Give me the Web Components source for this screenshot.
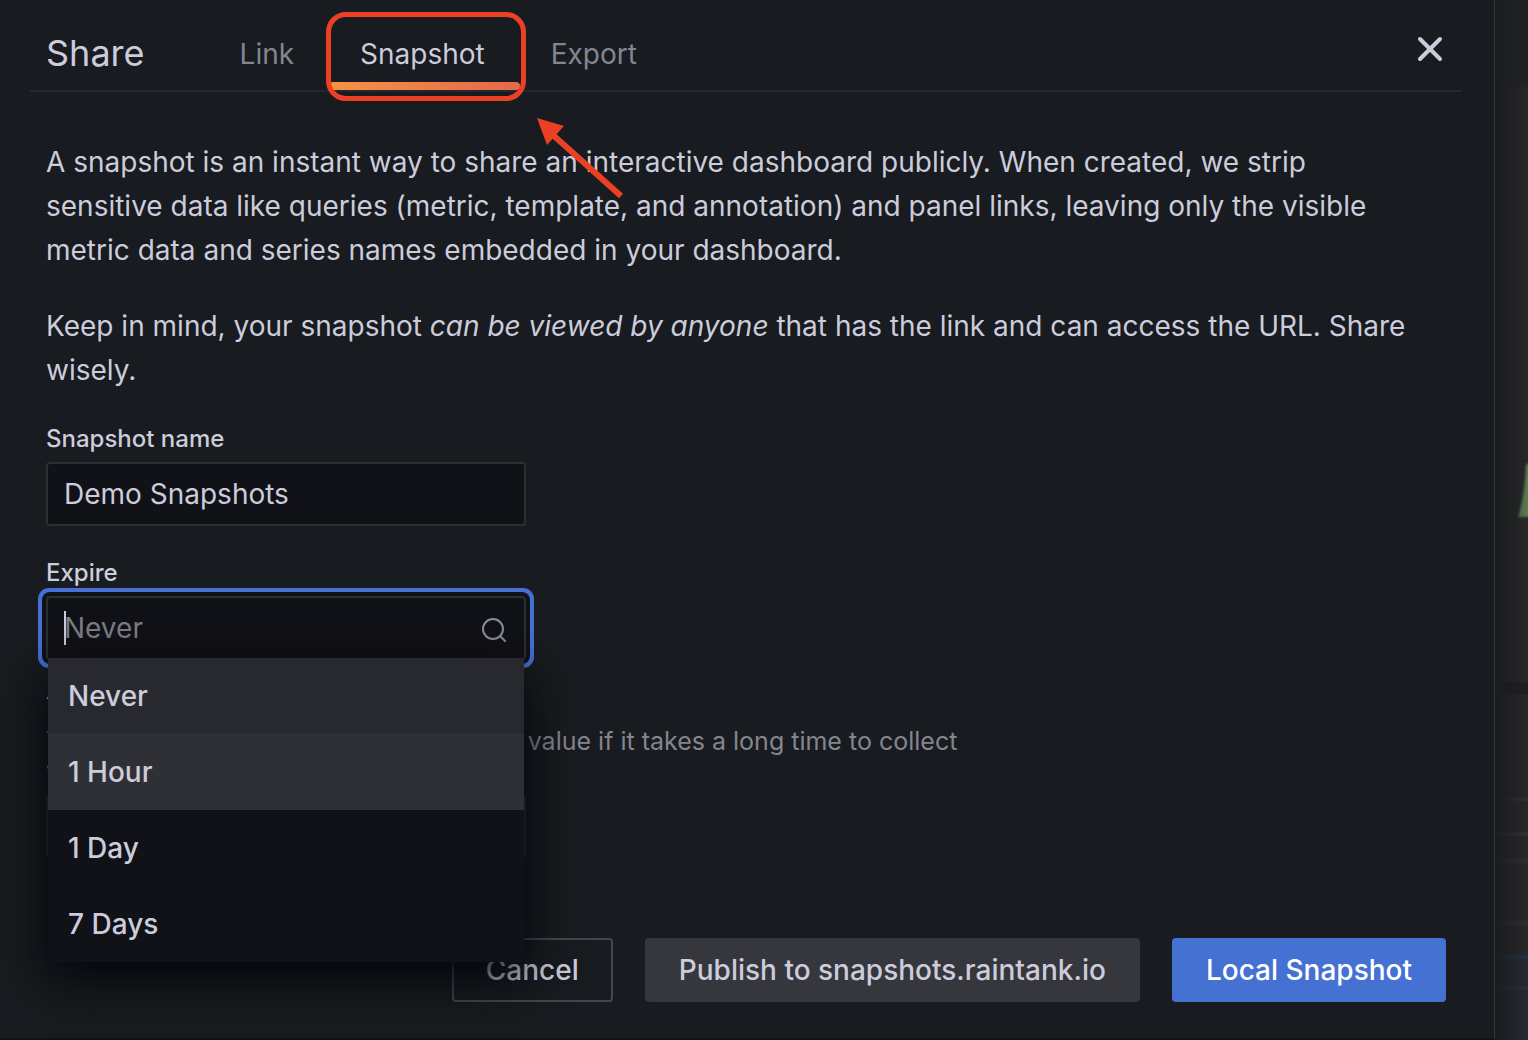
<!DOCTYPE html>
<html lang="en">
<head>
<meta charset="utf-8">
<title>Share</title>
<style>
    * { box-sizing: border-box; }
    body {
        margin: 0;
        min-height: 100vh;
        background: #232325;
        color: #ccccdc;
        font-family: Inter, "Liberation Sans", sans-serif;
        font-size: 28px;
        line-height: 44px;
        font-optical-sizing: none;
        overflow: hidden;
    }
    p {
        max-width: 1372px;
        margin: 0 0 32px;
    }
</style>
</head>
<body>
<dashboard-page>
    <share-modal heading="Share">
        <share-tab slot="tabs">Link</share-tab>
        <share-tab slot="tabs" active>Snapshot</share-tab>
        <share-tab slot="tabs">Export</share-tab>

        <p>A snapshot is an instant way to share an interactive dashboard publicly. When created, we strip sensitive data like queries (metric, template, and annotation) and panel links, leaving only the visible metric data and series names embedded in your dashboard.</p>
        <p>Keep in mind, your snapshot <em>can be viewed by anyone</em> that has the link and can access the URL. Share wisely.</p>

        <form-field label="Snapshot name" value="Demo Snapshots"></form-field>
        <expire-picker label="Expire" placeholder="Never" options="Never,1 Hour,1 Day,7 Days"></expire-picker>
        <form-field label="Timeout (seconds)" value="4" hint="You might need to configure the timeout value if it takes a long time to collect your dashboard metrics."></form-field>

        <action-button slot="actions" variant="outline">Cancel</action-button>
        <action-button slot="actions" variant="secondary">Publish to snapshots.raintank.io</action-button>
        <action-button slot="actions" variant="primary">Local Snapshot</action-button>
    </share-modal>
</dashboard-page>

<script>
// attach an open shadow root filled with the given markup
function render(el, html) {
    const root = el.attachShadow({ mode: 'open' });
    const template = document.createElement('template');
    template.innerHTML = '<style>* { box-sizing: border-box; }</style>' + html;
    root.appendChild(template.content.cloneNode(true));
    return root;
}

// dimmed dashboard behind the modal, only a strip of it shows on the right
class DashboardPage extends HTMLElement {
    constructor() {
        super();
        render(this, `
            <style>
                :host {
                    display: flex;
                    min-height: 100vh;
                }
                slot { display: contents; }
                .strip {
                    flex: 0 0 33px;
                    overflow: hidden;
                    background: #272729;
                }
                svg { display: block; }
            </style>
            <slot></slot>
            <div class="strip">
                <svg width="33" height="1040" viewBox="0 0 33 1040" aria-hidden="true">
                    <defs>
                        <linearGradient id="shade">
                            <stop offset="0" stop-color="#181b1d" stop-opacity="0.95"/>
                            <stop offset="1" stop-color="#181b1d" stop-opacity="0"/>
                        </linearGradient>
                        <filter id="soft"><feGaussianBlur stdDeviation="1"/></filter>
                    </defs>
                    <rect width="33" height="87" fill="#222223"/>
                    <rect y="682" width="33" height="12" fill="#1f1f21"/>
                    <rect y="960" width="33" height="80" fill="#262933"/>
                    <g filter="url(#soft)">
                        <path d="M23 517Q30 494 31 464H40V517Z" fill="#5d7d50"/>
                        <path d="M0 799H34M0 861H34M0 923H34M0 988H34" stroke="#333336" stroke-width="3"/>
                        <path d="M0 834H34" stroke="#37343f" stroke-width="3"/>
                        <path d="M0 957H34" stroke="#243548" stroke-width="4"/>
                    </g>
                    <rect width="33" height="1040" fill="url(#shade)"/>
                </svg>
            </div>
        `);
    }
}

class ShareModal extends HTMLElement {
    constructor() {
        super();
        const root = render(this, `
            <style>
                :host {
                    display: flex;
                    flex-direction: column;
                    flex: 1;
                    min-width: 0;
                    background: #181b1f;
                    border-right: 1px solid #38383c;
                    border-bottom: 2px solid #121215;
                }
                header {
                    display: flex;
                    align-items: center;
                    height: 92px;
                    margin: 0 32px 0 30px;
                    padding: 16px 16px 0;
                    border-bottom: 2px solid #24272b;
                }
                h2 {
                    margin: 0 62px 0 0;
                    font-size: 36px;
                    font-weight: 400;
                    line-height: 44px;
                }
                nav {
                    display: flex;
                    flex: 1;
                    align-self: stretch;
                }
                .close {
                    display: flex;
                    margin: 0 0 8px;
                    padding: 0;
                    border: 0;
                    background: none;
                    color: inherit;
                }
                main { padding: 48px 48px 0 46px; }
                footer {
                    display: flex;
                    justify-content: flex-end;
                    gap: 32px;
                    padding: 80px 48px 34px;
                }
            </style>
            <header>
                <h2></h2>
                <nav><slot name="tabs"></slot></nav>
                <button class="close" aria-label="Close">
                    <svg width="32" height="32" viewBox="0 0 32 32" fill="none" stroke="currentColor" stroke-width="4" stroke-linecap="round">
                        <path d="M6 6L26 26M26 6L6 26"/>
                    </svg>
                </button>
            </header>
            <main><slot></slot></main>
            <footer><slot name="actions"></slot></footer>
        `);
        root.querySelector('h2').textContent = this.getAttribute('heading');
    }
}

class ShareTab extends HTMLElement {
    constructor() {
        super();
        render(this, `
            <style>
                :host {
                    display: block;
                    position: relative;
                    color: #85858f;
                }
                :host([active]) { color: #ccccdc; }
                a {
                    display: block;
                    height: 100%;
                    padding: 16px 33px 0;
                    color: inherit;
                    text-decoration: none;
                }
                .bar, .ring, .arrow { display: none; }
                :host([active]) .bar {
                    display: block;
                    position: absolute;
                    left: 2px;
                    right: -2px;
                    bottom: 0;
                    height: 8px;
                    border-radius: 4px;
                    background: linear-gradient(90deg, #f59344, #e5684d);
                }
                /* red callout round the active tab */
                :host([active]) .ring {
                    display: block;
                    position: absolute;
                    inset: -4px -8px -11px -1px;
                    border: 5px solid #ec4024;
                    border-radius: 20px;
                }
                :host([active]) .arrow {
                    display: block;
                    position: absolute;
                    left: calc(100% + 19px);
                    top: calc(100% + 28px);
                    z-index: 1;
                }
            </style>
            <a href="#"><slot></slot></a>
            <span class="bar"></span>
            <span class="ring"></span>
            <svg class="arrow" width="88" height="84" viewBox="0 0 88 84" aria-hidden="true">
                <path d="M16 17L84 78" stroke="#ec4024" stroke-width="6"/>
                <path d="M0 0L27 8L10 27Z" fill="#ec4024"/>
            </svg>
        `);
    }
}

class FormField extends HTMLElement {
    constructor() {
        super();
        const root = render(this, `
            <style>
                :host {
                    display: block;
                    margin-bottom: 32px;
                    font-size: 24px;
                    line-height: 30px;
                }
                :host(:last-of-type) { margin-bottom: 0; }
                label {
                    display: block;
                    font-weight: 500;
                }
                .hint {
                    max-width: 960px;
                    margin-top: 4px;
                    color: #85858f;
                    font-size: 25px;
                }
                input {
                    display: block;
                    width: 480px;
                    height: 64px;
                    margin-top: 8px;
                    padding: 0 16px;
                    border: 2px solid #2d2e32;
                    border-radius: 4px;
                    background: #111217;
                    color: inherit;
                    font: inherit;
                    font-size: 28px;
                }
            </style>
            <label for="field"></label>
            <div class="hint"></div>
            <input id="field" type="text">
        `);
        root.querySelector('label').textContent = this.getAttribute('label');
        root.querySelector('input').value = this.getAttribute('value');
        const hint = root.querySelector('.hint');
        if (this.hasAttribute('hint')) {
            hint.textContent = this.getAttribute('hint');
        } else {
            hint.remove();
        }
    }
}

class ExpirePicker extends HTMLElement {
    constructor() {
        super();
        const root = render(this, `
            <style>
                :host {
                    display: block;
                    margin-bottom: 32px;
                }
                label {
                    display: block;
                    margin-bottom: 8px;
                    font-size: 24px;
                    font-weight: 500;
                    line-height: 30px;
                }
                .box {
                    display: flex;
                    align-items: center;
                    position: relative;
                    width: 480px;
                    height: 64px;
                    padding: 0 16px;
                    border: 2px solid #2d2e32;
                    border-radius: 4px;
                    background: #111217;
                    box-shadow: 0 0 0 4px #111217, 0 0 0 8px #4571d3;
                }
                .caret {
                    width: 2px;
                    height: 34px;
                    margin-right: -2px;
                    background: #ccccdc;
                }
                input {
                    flex: 1;
                    min-width: 0;
                    padding: 0;
                    border: 0;
                    outline: 0;
                    background: none;
                    color: inherit;
                    font: inherit;
                }
                input::placeholder { color: #7d7d86; opacity: 1; }
                /* option list lies over the rest of the form */
                ul {
                    position: absolute;
                    top: 100%;
                    left: 0;
                    right: 0;
                    z-index: 2;
                    margin: 0;
                    padding: 0;
                    list-style: none;
                    background: #111217;
                    box-shadow: 0 16px 48px #010409;
                }
                li {
                    padding: 16px 20px;
                    font-weight: 500;
                }
                li:nth-child(1) { background: #28292e; }
                li:nth-child(2) { background: #2f3035; }
            </style>
            <label for="expire"></label>
            <div class="box">
                <span class="caret"></span>
                <input id="expire" type="text" role="combobox" aria-expanded="true" aria-controls="list">
                <svg width="28" height="28" viewBox="0 0 28 28" fill="none" stroke="#8e8e99" stroke-width="2" stroke-linecap="round" aria-hidden="true">
                    <circle cx="13" cy="15" r="10"/>
                    <path d="M20 22L25 27"/>
                </svg>
                <ul id="list" role="listbox"></ul>
            </div>
        `);
        root.querySelector('label').textContent = this.getAttribute('label');
        root.querySelector('input').placeholder = this.getAttribute('placeholder');
        const list = root.querySelector('ul');
        this.getAttribute('options').split(',').forEach((name) => {
            const item = document.createElement('li');
            item.setAttribute('role', 'option');
            item.textContent = name;
            list.appendChild(item);
        });
    }
}

class ActionButton extends HTMLElement {
    constructor() {
        super();
        render(this, `
            <style>
                :host { display: block; }
                button {
                    height: 64px;
                    padding: 0 32px;
                    border: 2px solid #35373c;
                    border-radius: 4px;
                    background: #35373c;
                    color: inherit;
                    font: inherit;
                    font-weight: 500;
                    white-space: nowrap;
                }
                :host([variant="outline"]) button {
                    background: none;
                    border-color: #44474d;
                }
                :host([variant="primary"]) button {
                    background: #4571d3;
                    border-color: #4571d3;
                    color: #fff;
                }
            </style>
            <button type="button"><slot></slot></button>
        `);
    }
}

customElements.define('dashboard-page', DashboardPage);
customElements.define('share-modal', ShareModal);
customElements.define('share-tab', ShareTab);
customElements.define('form-field', FormField);
customElements.define('expire-picker', ExpirePicker);
customElements.define('action-button', ActionButton);
</script>
</body>
</html>
